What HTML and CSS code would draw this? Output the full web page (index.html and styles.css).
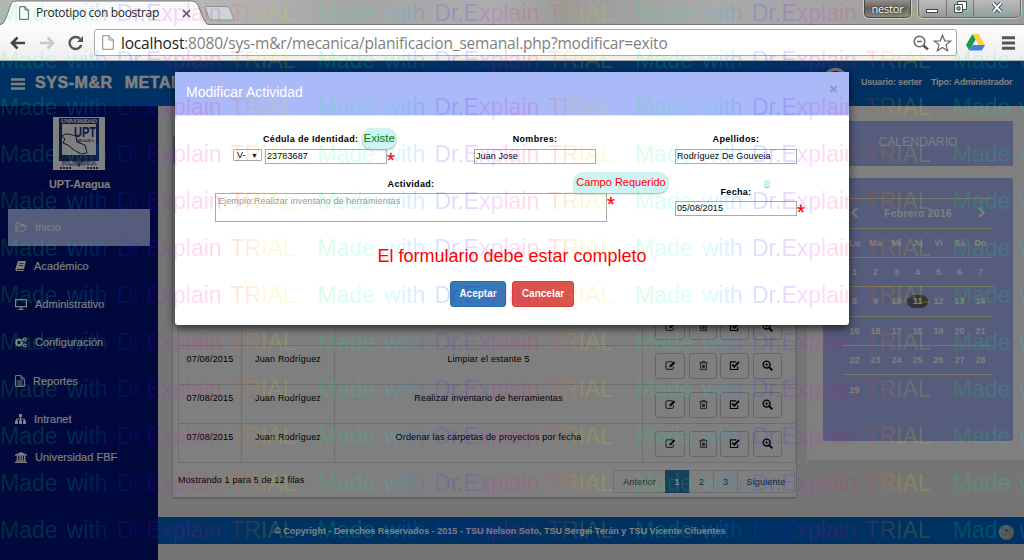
FILE: index.html
```html
<!DOCTYPE html>
<html lang="es">
<head>
<meta charset="utf-8">
<title>Prototipo con boostrap</title>
<link rel="stylesheet" href="styles.css">
</head>
<body>
<svg class="defs" width="0" height="0">
  <symbol id="i-edit" viewBox="0 0 12 12"><path d="M8.500 2H2.200Q1 2 1 3.200V9Q1 10.200 2.200 10.200H8Q9.200 10.200 9.200 9V7" fill="none" stroke="currentColor" stroke-width=".9"/><path d="M4.800 8l.3-2L9.600 1.500l1.600 1.600L6.800 7.700z" fill="currentColor"/></symbol>
  <symbol id="i-trash" viewBox="0 0 12 12"><path d="M1.500 3h9M4 3l.5-1.500h3L8 3M2.700 3v7.500h6.600V3M4.700 5v4M6 5v4M7.300 5v4" fill="none" stroke="currentColor" stroke-width=".75"/></symbol>
  <symbol id="i-check" viewBox="0 0 12 12"><path d="M9.500 7v3.300H1.500V2H8" fill="none" stroke="currentColor" stroke-width="1.200"/><path d="M3.500 5l2.300 2.300L11 2" fill="none" stroke="currentColor" stroke-width="2"/></symbol>
  <symbol id="i-zoom" viewBox="0 0 12 12"><circle cx="5" cy="5" r="3.800" fill="none" stroke="currentColor" stroke-width="1.500"/><path d="M3 5h4M5 3v4" stroke="currentColor"/><path d="M7.800 7.800l3.400 3.400" stroke="currentColor" stroke-width="2"/></symbol>
</svg>

<header class="browser">
  <div class="tabstrip">
    <svg class="tabshape" width="240" height="25" viewBox="0 0 240 25"><path d="M0 25Q4 24 6 18L11 4Q12 1 16 1H192Q196 1 198 5L204 20Q206 25 210 25" fill="#fafafa" stroke="#777"/><path d="M206 6.500H227Q229 6.500 230 9L234 20H212Q210 20 209 18L205 8Q205 6.500 206 6.500z" fill="#ccd3da" stroke="#909090"/></svg>
    <div class="tab">
      <svg width="10" height="14" viewBox="0 0 10 14"><path d="M.7.700H6L9.300 4V13.300H.7zM6 .7V4H9.300" fill="#fff" stroke="#555"/></svg>
      <span class="tabname">Prototipo con boostrap</span>
      <svg width="9" height="9" viewBox="0 0 9 9"><path d="M1 1l7 7M8 1L1 8" stroke="#555" stroke-width="1.600"/></svg>
    </div>
    <div class="user">nestor</div>
    <div class="winbtns">
      <span><svg width="12" height="14"><rect x=".5" y="9.500" width="11" height="3" fill="#fff" stroke="#445"/></svg></span>
      <span><svg width="13" height="12"><path d="M3.500.500h9v8h-9z" fill="#fff" stroke="#445"/><path d="M.5 3.500h8v8h-8z" fill="#fff" stroke="#445"/><path d="M3 6h3v3H3z" fill="#aaa" stroke="#445"/></svg></span>
      <span><svg width="12" height="11" viewBox="0 0 12 11"><path d="M2 1l8 9M10 1L2 10" stroke="#445" stroke-width="4"/><path d="M2 1l8 9M10 1L2 10" stroke="#fff" stroke-width="2"/></svg></span>
    </div>
  </div>
  <div class="toolbar">
    <svg width="16" height="14" viewBox="0 0 16 14"><path d="M15 7H2M7.500 1.500L2 7l5.500 5.500" fill="none" stroke="#444" stroke-width="2.600"/></svg>
    <svg class="fwd" width="16" height="14" viewBox="0 0 16 14"><path d="M1 7H14M8.500 1.500L14 7 8.500 12.500" fill="none" stroke="#c8c8c8" stroke-width="2.600"/></svg>
    <svg class="reload" width="16" height="16" viewBox="0 0 16 16"><path d="M13.300 10A6 6 0 1 1 12 3.800" fill="none" stroke="#555" stroke-width="2.400"/><path d="M15 1v6H9z" fill="#555"/></svg>
    <div class="address">
      <svg width="12" height="15" viewBox="0 0 12 15"><path d="M.7.700H7L11.300 5V14.300H.7zM7 .7V5H11.300" fill="#fff" stroke="#888"/></svg>
      <span class="url"><b>localhost</b>:8080/sys-m&amp;r/mecanica/planificacion_semanal.php?modificar=exito</span>
      <svg width="16" height="16" viewBox="0 0 16 16"><circle cx="6.500" cy="6.500" r="5.300" fill="none" stroke="#666" stroke-width="1.500"/><path d="M4 6.500h5" stroke="#666" stroke-width="1.500"/><path d="M10.500 10.500l4.500 4" stroke="#555" stroke-width="2.400"/></svg>
      <svg class="star" width="19" height="18" viewBox="0 0 19 18"><path d="M9.500 1.200l2.200 5.600 6 .3-4.700 3.700 1.600 5.900-5.100-3.300-5.100 3.300L6 10.800 1.300 7.100l6-.3z" fill="#fff" stroke="#666" stroke-width="1.200"/></svg>
    </div>
    <svg class="drive" width="19" height="17" viewBox="0 0 19 17"><path d="M6.500 0L0 11l3.200 5.500L9.700 5.500z" fill="#139b55"/><path d="M6.500 0h6.200L19 11h-6.200z" fill="#ffcf48"/><path d="M6.500 11H19l-3.200 5.500H3.200z" fill="#3e7ee8"/></svg>
    <svg class="menu" width="13" height="14" viewBox="0 0 13 14"><path d="M0 1.800h13M0 7h13M0 12.200h13" stroke="#555" stroke-width="3"/></svg>
  </div>
</header>

<div class="page">
  <div class="topbar">
    <svg width="14" height="12" viewBox="0 0 14 12"><path d="M0 1.500h14M0 6h14M0 10.500h14" stroke="#fff" stroke-width="2.600"/></svg>
    <strong class="brand"><span>SYS-M&amp;R</span><span>METALMECANICA</span></strong>
    <i class="avatar"></i>
    <span class="who"><span>Usuario: serter</span><span>Tipo: Administrador</span></span>
  </div>
  <div class="columns">
    <nav class="sidebar">
      <svg class="logo" width="52" height="53" viewBox="0 0 52 53"><rect width="52" height="53" fill="#fff"/><path d="M6 1h40v43H31l-5 6-5-6H6z" fill="#1c3288"/><path d="M9 7h34v31H9z" fill="#fff"/><g font-family="Liberation Serif" font-weight="bold" text-anchor="middle"><text x="26" y="6" font-size="6" fill="#fff" textLength="36">UNIVERSIDAD</text><text x="32" y="20" font-size="15" font-family="Liberation Sans" fill="#1c3288" textLength="22" lengthAdjust="spacingAndGlyphs">UPT</text><text x="32" y="25" font-size="4" fill="#111">ARAGUA</text><text x="26" y="47.500" font-size="6.500" fill="#fff" stroke="#1c3288" stroke-width=".3" textLength="35">POLITECNICA</text></g><path d="M9 19c5-4 9-1 14 0l1 6 8 3 2 8-6 1-7-4-6-5-5-2 2-4z" fill="#fff" stroke="#222"/><path d="M9 40h34M7 51h11M34 51h12" stroke="#444" stroke-width="2" stroke-dasharray="2 1"/></svg>
      <b class="uni">UPT-Aragua</b>
      <a class="on"><svg width="12" height="10" viewBox="0 0 12 10"><path d="M1 9V1h3l1 1.500h4V4M1 9l2.500-5h8L9 9z" fill="none" stroke="currentColor"/></svg><span>Inicio</span></a>
      <a><svg width="11" height="10" viewBox="0 0 11 10"><path d="M3 0h8L9 8H2V9h7V10H1Q0 9 .5 7.500z" fill="currentColor"/><path d="M4.500 2.500h4M4 4.500h4" stroke="#001078" stroke-width=".7"/></svg><span>Académico</span></a>
      <a><svg width="12" height="11" viewBox="0 0 12 11"><path d="M.6.600h10.800v7H.6zM6 8v2M3.500 10.300h5" fill="none" stroke="currentColor" stroke-width="1.200"/></svg><span>Administrativo</span></a>
      <a><svg width="12" height="11" viewBox="0 0 12 11"><circle cx="4" cy="5.500" r="2.700" fill="none" stroke="currentColor" stroke-width="2"/><path d="M4 .8v9.400M-.5 5.500h9M.8 2.300l6.400 6.400M7.200 2.300L.8 8.700" stroke="currentColor" stroke-dasharray="1.800 6"/><circle cx="9.800" cy="2.500" r="1.400" fill="none" stroke="currentColor" stroke-width="1.300"/><circle cx="9.800" cy="8.500" r="1.400" fill="none" stroke="currentColor" stroke-width="1.300"/></svg><span>Configuración</span></a>
      <a><svg width="10" height="12" viewBox="0 0 10 12"><path d="M.6.600H6L9.400 4v7.400H.6zM6 .6V4h3.400M2.500 6h5M2.500 8h5M2.500 10h5" fill="none" stroke="currentColor"/></svg><span>Reportes</span></a>
      <a><svg width="11" height="10" viewBox="0 0 11 10"><path d="M4 0h3v3H4zM0 6.500h3V10H0zM4 6.500h3V10H4zM8 6.500h3V10H8z" fill="currentColor"/><path d="M5.500 3v4M1.500 7V5h8v2" fill="none" stroke="currentColor"/></svg><span>Intranet</span></a>
      <a><svg width="12" height="11" viewBox="0 0 12 11"><path d="M6 0l6 2.700v1H0v-1zM0 9.800h12V11H0zM1 8.500h10v1H1z" fill="currentColor"/><path d="M2.500 4v5M5 4v5M7.200 4v5M9.600 4v5" stroke="currentColor" stroke-width="1.400"/></svg><span>Universidad FBF</span></a>
    </nav>
    <div class="content">
      <div class="panels">
        <section class="card">
          <div class="strip"></div>
          <div class="rows">
            <div class="row"><span></span><span></span><span></span><span class="acts"><i><svg><use href="#i-edit"/></svg></i><i><svg><use href="#i-trash"/></svg></i><i><svg><use href="#i-check"/></svg></i><i><svg><use href="#i-zoom"/></svg></i></span></div>
            <div class="row"><span>07/08/2015</span><span>Juan Rodríguez</span><span>Limpiar el estante 5</span><span class="acts"><i><svg><use href="#i-edit"/></svg></i><i><svg><use href="#i-trash"/></svg></i><i><svg><use href="#i-check"/></svg></i><i><svg><use href="#i-zoom"/></svg></i></span></div>
            <div class="row"><span>07/08/2015</span><span>Juan Rodríguez</span><span>Realizar inventario de herramientas</span><span class="acts"><i><svg><use href="#i-edit"/></svg></i><i><svg><use href="#i-trash"/></svg></i><i><svg><use href="#i-check"/></svg></i><i><svg><use href="#i-zoom"/></svg></i></span></div>
            <div class="row"><span>07/08/2015</span><span>Juan Rodríguez</span><span>Ordenar las carpetas de proyectos por fecha</span><span class="acts"><i><svg><use href="#i-edit"/></svg></i><i><svg><use href="#i-trash"/></svg></i><i><svg><use href="#i-check"/></svg></i><i><svg><use href="#i-zoom"/></svg></i></span></div>
          </div>
          <div class="tfoot"><span class="count">Mostrando 1 para 5 de 12 filas</span>
            <div class="pager"><span class="muted">Anterior</span><span class="cur">1</span><span>2</span><span>3</span><span>Siguiente</span></div></div>
        </section>
        <aside class="side">
          <div class="caltitle">CALENDARIO</div>
          <div class="cal">
            <div class="month"><svg width="7" height="11" viewBox="0 0 7 11"><path d="M6 1L1.500 5.500 6 10" fill="none" stroke="#fff" stroke-width="2.400"/></svg><span>Febrero 2016</span><svg width="7" height="11" viewBox="0 0 7 11"><path d="M1 1l4.500 4.500L1 10" fill="none" stroke="#fff" stroke-width="2.400"/></svg></div>
            <div class="wk"><span>Lu</span><span>Ma</span><span>Mi</span><span>Ju</span><span>Vi</span><span>Sá</span><span>Do</span></div>
            <div class="wk"><span>1</span><span>2</span><span>3</span><span>4</span><span>5</span><span>6</span><span>7</span></div>
            <div class="wk"><span>8</span><span>9</span><span>10</span><span class="today">11</span><span>12</span><span>13</span><span>14</span></div>
            <div class="wk"><span>15</span><span>16</span><span>17</span><span>18</span><span>19</span><span>20</span><span>21</span></div>
            <div class="wk"><span>22</span><span>23</span><span>24</span><span>25</span><span>26</span><span>27</span><span>28</span></div>
            <div class="wk last"><span>29</span></div>
          </div>
        </aside>
      </div>
      <footer class="foot"><span>© Copyright - Derechos Reservados - 2015 - TSU Nelson Soto, TSU Sergei Terán y TSU Vicente Cifuentes</span><i class="up">⌃</i></footer>
    </div>
  </div>
</div>
<div class="backdrop"></div>

<div class="modal">
  <div class="mhead"><span>Modificar Actividad</span><b>×</b></div>
  <div class="mbody">
    <div class="line names">
      <div class="field ced">
        <div class="lab"><label>Cédula de Identidad:</label><em class="tip ok">Existe</em></div>
        <div class="ctl"><span class="sel">V-<i>▼</i></span><span class="inp">23783687</span><b class="req">*</b></div>
      </div>
      <div class="field"><div class="lab"><label>Nombres:</label></div><div class="ctl"><span class="inp">Juan Jose</span></div></div>
      <div class="field"><div class="lab"><label>Apellidos:</label></div><div class="ctl"><span class="inp">Rodríguez De Gouveia</span></div></div>
    </div>
    <div class="line second">
      <div class="field act"><div class="lab"><label>Actividad:</label></div><div class="ctl"><span class="area">Ejemplo:Realizar inventario de herramientas</span><b class="req">*</b></div><em class="tip err">Campo Requerido</em></div>
      <div class="field date"><div class="lab"><label>Fecha:</label></div><div class="ctl"><span class="inp">05/08/2015</span><b class="req">*</b></div><em class="dot"></em></div>
    </div>
    <p class="msg">El formulario debe estar completo</p>
    <div class="btns"><span class="btn blue">Aceptar</span><span class="btn red">Cancelar</span></div>
  </div>
</div>

<div class="wm" aria-hidden="true"></div>
<script src="watermark.js"></script>
</body>
</html>
```
FILE: watermark.js
```js
// Tiles the trial notice over the whole window.
const layer = document.querySelector('.wm');
for (let r = 0; r < 12; r++) {
  const row = document.createElement('div');
  row.className = 'wmrow';
  for (let c = 0; c < 4; c++) {
    const s = document.createElement('span');
    s.textContent = 'Made with Dr.Explain TRIAL';
    row.appendChild(s);
  }
  layer.appendChild(row);
}
```
FILE: styles.css
```css
* { box-sizing: border-box; }
body { margin: 0; width: 1024px; height: 560px; overflow: hidden; position: relative; font: 9px/12px "Liberation Sans", Arial, sans-serif; color: #000; display: flex; flex-direction: column; }
i, em { font-style: normal; }
svg { display: block; flex: none; }
.defs { position: absolute; }

.browser { height: 61px; flex: none; font-family: "Open Sans", "Noto Sans", sans-serif; }
.tabstrip { height: 25px; background: linear-gradient(100deg, #b5b5b5 0 20%, #a5a5a5 35%, #adadad 48%, #9b9b9b 55%, #aaa 70%, #999 100%); border-bottom: 1px solid #777; display: flex; position: relative; }
.tabshape { position: absolute; left: 0; top: 0; }
.tab { position: relative; display: flex; align-items: center; width: 205px; padding: 1px 0 0 19px; height: 25px; }
.tabname { font-size: 12px; width: 124px; margin: 0 29px 0 7px; white-space: nowrap; letter-spacing: -.32px; color: #222; }
.tabname { margin-right: 22px; }
.user { margin-left: 659px; width: 47px; height: 18px; border: 1px solid #444; border-top: 0; border-radius: 0 0 5px 5px; background: linear-gradient(#909090, #606060 50%, #858585); box-shadow: 0 0 0 1px #ccc; color: #fff; font-size: 11px; letter-spacing: -.2px; line-height: 17px; text-align: center; text-shadow: 0 0 2px #000; }
.winbtns { margin-left: 7px; width: 103px; height: 18px; display: flex; border: 1px solid #666; border-top: 0; border-radius: 0 0 5px 5px; background: linear-gradient(#bbb, #999); box-shadow: 0 0 0 1px #ccc; }
.winbtns span { width: 28px; border-right: 1px solid #777; display: flex; align-items: center; justify-content: center; padding-bottom: 3px; }
.winbtns span:last-child { width: 46px; border: 0; }
.toolbar { height: 36px; background: linear-gradient(#fdfdfd, #eee); border-bottom: 1px solid #aaa; display: flex; align-items: center; padding: 0 9px 0 10px; }
.fwd { margin-left: 13px; }
.reload { margin-left: 13px; }
.address { flex: none; margin-left: 10px; width: 863px; height: 27px; border: 1px solid #aaa; border-radius: 3px; background: #fff; display: flex; align-items: center; padding: 0 4px 0 7px; }
.url { flex: 1; margin-left: 7px; font-size: 15.500px; letter-spacing: -.19px; line-height: 20px; color: #808080; white-space: nowrap; }
.url b { font-weight: 400; color: #222; }
.star { margin-left: 4px; }
.drive { margin-left: 9px; }
.menu { margin-left: 17px; }

.page { flex: 1; display: flex; flex-direction: column; background: #ebebeb; }
.topbar { height: 45px; flex: none; background: #0062c6; display: flex; align-items: center; padding-left: 11px; color: #fff; }
.brand { display: flex; gap: 12px; margin-left: 10px; font-size: 16px; line-height: 18px; letter-spacing: .55px; width: 775px; margin-top: -2px; -webkit-text-stroke: .5px #fff; }
.avatar { width: 27px; height: 27px; border-radius: 50%; border: 3px solid #eee; background: #333; margin-left: 12px; margin-top: -4px; }
.who { display: flex; gap: 9px; margin-left: 12px; white-space: nowrap; font-weight: bold; letter-spacing: -.21px; margin-top: -3px; }
.columns { flex: 1; display: flex; }
.sidebar { width: 158px; background: #001078; color: #fff; display: flex; flex-direction: column; padding: 11px 8px 0; }
.logo { margin-left: 45px; }
.uni { font-size: 11px; text-align: center; margin: 8px 0 19px; height: 12px; width: 143px; letter-spacing: -.2px; }
.sidebar a { height: 38.200px; width: 142px; padding-left: 7px; display: flex; align-items: center; font-size: 11px; letter-spacing: .03px; -webkit-text-stroke: .1px #fff; }
.sidebar a.on { background: #aab8f8; height: 37px; margin-bottom: 1px; padding-bottom: 1px; }
.sidebar a span { margin-left: 8px; }
.content { flex: 1; display: flex; flex-direction: column; }
.panels { display: flex; height: 411px; }
.card { margin-left: 15px; width: 623px; height: 391px; background: #fff; box-shadow: 0 1px 2px #999; display: flex; flex-direction: column; }
.strip { margin-top: 30px; height: 27px; width: 100%; background: #aab8f8; }
.rows { margin: 144px 0 0 5px; width: 618px; border-left: 1px solid #ddd; flex: none; }
.row { display: grid; grid-template-columns: 63px 93px 308px 153px; height: 39px; border-bottom: 1px solid #ddd; text-align: center; letter-spacing: .18px; }
.row > span { border-right: 1px solid #ddd; padding-top: 7px; white-space: nowrap; }
.row .acts { display: flex; gap: 4px; padding: 7px 0 0 12px; }
.acts i { width: 28px; height: 26px; border: 1px solid #ccc; border-radius: 3px; display: flex; align-items: center; justify-content: center; }
.acts i:first-child { width: 30px; }
.acts i:nth-child(3), .acts i:last-child { width: 29px; }
.acts i:nth-child(3) { margin-left: -1px; }
.acts svg { width: 11px; height: 11px; margin-top: -2px; }
.tfoot { display: flex; justify-content: space-between; padding: 7px 1px 0 5px; }
.count { margin-top: 4px; letter-spacing: .16px; }
.pager { display: flex; height: 23px; border: 1px solid #ddd; border-radius: 3px; line-height: 22px; text-align: center; color: #23527c; letter-spacing: .15px; width: 182px; }
.pager span { width: 24px; border-right: 1px solid #ddd; }
.pager .cur { width: 25px; background: #337ab7; color: #fff; font-weight: bold; margin: -1px 0; line-height: 24px; }
.pager span:first-child { width: 51px; border: 0; color: #555; }
.pager span:last-child { flex: 1; border: 0; }
.side { margin-left: 11px; width: 217px; height: 354px; background: #fff; padding: 15px 0 0 16px; }
.caltitle { width: 190px; height: 45px; background: #aab8f8; color: #fff; font-size: 12px; line-height: 43px; text-align: center; letter-spacing: .1px; }
.cal { width: 190px; height: 263px; margin-top: 12px; background: #aab8f8; border-radius: 3px; padding: 20px 20px 0; color: #fff; font-weight: bold; text-align: center; }
.month { height: 31px; border-top: 1px solid #eeeec8; border-bottom: 1px solid #eeeec8; display: flex; align-items: center; justify-content: space-between; padding: 0 8px 2px; font-size: 10.500px; letter-spacing: .2px; }
.wk { height: 29.200px; border-bottom: 1px solid #eeeec8; display: grid; grid-template-columns: repeat(7, 21px); justify-content: start; padding-left: 1px; align-items: center; }
.wk.last { border: 0; }
.today { background: #686868; border-radius: 7px; line-height: 13px; }
.foot { height: 27px; background: #0062c6; color: #fff; display: flex; align-items: center; padding: 0 10px 0 116px; font-weight: bold; font-size: 9px; white-space: nowrap; }
.foot span { letter-spacing: .03px; }
.up { margin-left: auto; width: 15px; height: 15px; border-radius: 50%; background: #aaa; color: #333; text-align: center; line-height: 17px; margin-top: 3px; }
.backdrop { position: absolute; left: 0; top: 61px; width: 1024px; height: 499px; background: rgba(0,0,0,.5); }

.modal { position: absolute; left: 175px; top: 72px; width: 674px; height: 253px; background: #fff; border-radius: 0 0 3px 3px; box-shadow: 0 3px 10px rgba(0,0,0,.7); }
.mhead { height: 44px; background: #aab9f7; border-bottom: 1px solid #e5e5e5; color: #fff; font-size: 14px; display: flex; justify-content: space-between; align-items: center; padding: 0 11px 3px 11px; }
.mhead b { color: #8794c6; font-size: 15px; margin-top: -7px; }
.line { display: flex; }
.names { padding: 12px 0 0 58px; height: 48px; }
.second { padding-left: 40px; height: 68px; margin-top: 8px; }
.field { position: relative; width: 122px; }
.field.ced { width: 163px; margin-right: 78px; }
.field.ced + .field { margin-right: 79px; }
.lab { height: 21px; display: flex; justify-content: center; align-items: center; font-weight: bold; letter-spacing: .34px; padding-top: 1px; white-space: nowrap; }
.ced .lab { padding-left: 30px; justify-content: flex-start; }
.ctl { display: flex; }
.inp { width: 122px; height: 15px; border: 1px solid #aaa; padding-left: 1px; line-height: 13px; letter-spacing: .1px; white-space: nowrap; flex: none; }
.sel { width: 29px; height: 12px; border: 1px solid #aaa; border-radius: 1px; margin-right: 3px; padding: 0 3px; line-height: 11px; display: flex; justify-content: space-between; flex: none; }
.sel i { font-size: 7px; }
.req { color: red; font-size: 20px; font-weight: 400; line-height: 23px; height: 12px; -webkit-text-stroke: .3px red; }
.tip { background: #cdf4f3; border-radius: 9px; box-shadow: 0 1px 2px #aaa; font-weight: 400; white-space: nowrap; font-size: 11px; letter-spacing: 0; }
.ok { color: #008000; height: 21px; line-height: 20px; width: 38px; text-align: center; margin-left: 4px; margin-top: -2px; font-size: 11.500px; }
.err { color: red; position: absolute; left: 359px; top: 0; width: 94px; height: 21px; line-height: 21px; text-align: center; border-bottom-left-radius: 1px; }
.field.act { width: 392px; margin-right: 68px; }
.act .lab { padding-top: 2px; }
.area { width: 392px; height: 29px; border: 1px solid #aaa; color: #999; padding: 1px 2px; flex: none; letter-spacing: .12px; }
.date .lab { margin-top: 8px; padding-top: 2px; }
.dot { position: absolute; left: 89px; top: 8px; width: 6px; height: 7px; background: #cdf4f3; box-shadow: 0 1px 1px #bbb; border-radius: 2px; }
.msg { margin: 6px 0 0; height: 20px; line-height: 20px; font-size: 18px; color: red; text-align: center; }
.btns { display: flex; justify-content: center; gap: 6px; margin-top: 15px; }
.btn { height: 26px; line-height: 24px; border-radius: 3px; color: #fff; font-size: 10px; font-weight: bold; text-align: center; }
.blue { width: 56px; background: #337ab7; border: 1px solid #2e6da4; }
.red { width: 62px; background: #d9534f; border: 1px solid #d43f3a; }

.wm { position: absolute; inset: 0; overflow: hidden; opacity: .15; pointer-events: none; }
.wmrow { height: 47px; width: 1280px; display: flex; white-space: nowrap; font-size: 23px; line-height: 27px; color: transparent; background: linear-gradient(90deg, #0f4 0, #0f8 30px, #0ff 70px, #08f 100px, #20f 140px, #a0f 165px, #f0d 185px, #f05 215px, #f50 240px, #fc0 265px, #cf0 295px, #0f4 317.600px) 0 0 / 317.600px 100%; -webkit-background-clip: text; background-clip: text; }
.wmrow span { width: 317.600px; flex: none; word-spacing: 2.800px; }
```
